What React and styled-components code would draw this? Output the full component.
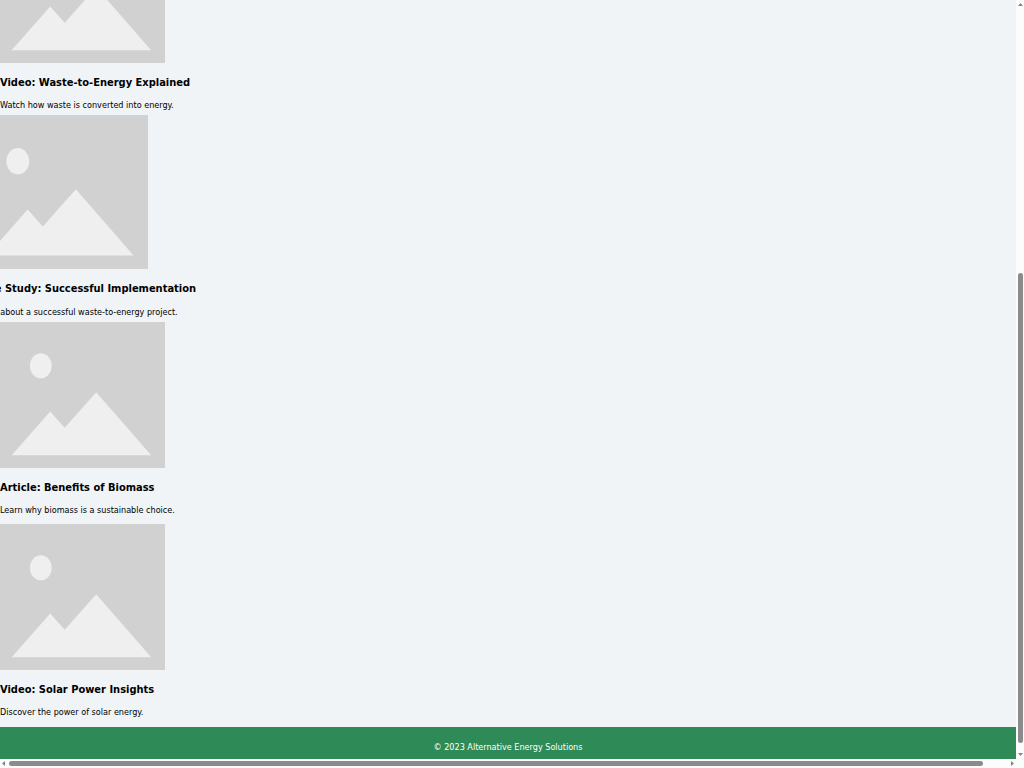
import React from "react";
import styled, { createGlobalStyle, css } from "styled-components";

const GlobalStyle = createGlobalStyle`
  body {
    margin: 0;
    background: #f0f4f7;
    color: #000;
    font-family: "DejaVu Sans Condensed", "DejaVu Sans", sans-serif;
  }
`;

const Shell = styled.div`
  display: grid;
  grid-template-columns: minmax(0, 1fr) 8px;
  grid-template-rows: minmax(0, 1fr) 9px;
  height: 100vh;
  overflow: hidden;
  background: #fcfcfc;
`;

const Page = styled.div`
  display: flex;
  flex-direction: column;
  justify-content: flex-end;
  overflow: hidden;
  background: #f0f4f7;
`;

const Card = styled.article`
  flex: none;
  ${({ $raised }) =>
    $raised &&
    css`
      margin: -4px 0 -5px -25px;
    `}
`;

const Thumbnail = styled.svg`
  display: block;
  width: ${({ $raised }) => ($raised ? "173px" : "165px")};
  height: ${({ $raised }) => ($raised ? "154px" : "146px")};
`;

const Title = styled.h3`
  margin: 12px 0 ${({ $raised }) => ($raised ? "8px" : "7px")};
  font-size: 11px;
  line-height: 16px;
  white-space: nowrap;
`;

const Summary = styled.p`
  margin: 0 0 ${({ $raised }) => ($raised ? "8px" : "7px")};
  font-size: 9px;
  line-height: 14px;
  white-space: nowrap;
`;

const Footer = styled.footer`
  flex: none;
  margin-top: 1px;
  padding: 12px 0 3px;
  background: #2e8b57;
  color: #fff;
  font-size: 9px;
  line-height: 17px;
  text-align: center;
`;

const Bar = styled.div`
  display: flex;
  flex-direction: ${({ $vertical }) => ($vertical ? "column" : "row")};
  align-items: center;
  justify-content: space-between;
`;

const Track = styled.div`
  display: flex;
  flex: 1;
  flex-direction: ${({ $vertical }) => ($vertical ? "column" : "row")};
`;

const Space = styled.div`
  flex: ${({ $grow }) => $grow};
`;

const Thumb = styled.div`
  flex: ${({ $grow }) => $grow};
  min-width: 5px;
  min-height: 5px;
  border-radius: 3px;
  background: #8b8b8b;
`;

const Arrow = styled.svg`
  display: block;
  flex: none;
  width: 9px;
  height: 9px;
`;

const resources = [
  { title: "Video: Waste-to-Energy Explained", text: "Watch how waste is converted into energy." },
  {
    title: "Case Study: Successful Implementation",
    text: "Learn about a successful waste-to-energy project.",
    raised: true,
  },
  { title: "Article: Benefits of Biomass", text: "Learn why biomass is a sustainable choice." },
  { title: "Video: Solar Power Insights", text: "Discover the power of solar energy." },
];

function Placeholder({ raised }) {
  return (
    <Thumbnail $raised={raised} viewBox="0 0 165 146" preserveAspectRatio="none" aria-hidden="true">
      <rect width="165" height="146" fill="#d1d1d1" />
      <ellipse cx="40.8" cy="43.8" rx="10.9" ry="12.5" fill="#efefef" />
      <path d="M11.6 133.2L50.2 89.5L64.7 105.8L96.2 70.3L151.2 133.2Z" fill="#efefef" />
    </Thumbnail>
  );
}

function ArrowIcon({ d }) {
  return (
    <Arrow viewBox="0 0 9 9" aria-hidden="true">
      <path d={d} fill="#858585" />
    </Arrow>
  );
}

export default function App() {
  return (
    <>
      <GlobalStyle />
      <Shell>
        <Page>
          {resources.map(({ title, text, raised }) => (
            <Card key={title} $raised={raised}>
              <Placeholder raised={raised} />
              <Title $raised={raised}>{title}</Title>
              <Summary $raised={raised}>{text}</Summary>
            </Card>
          ))}
          <Footer>© 2023 Alternative Energy Solutions</Footer>
        </Page>
        <Bar $vertical>
          <ArrowIcon d="M2 6L4.5 3L7 6Z" />
          <Track $vertical>
            <Space $grow={264} />
            <Thumb $grow={470} />
            <Space $grow={7} />
          </Track>
          <ArrowIcon d="M2 3L4.5 6L7 3Z" />
        </Bar>
        <Bar>
          <ArrowIcon d="M5 2L2 4.5L5 7Z" />
          <Track>
            <Thumb $grow={974} />
            <Space $grow={24} />
          </Track>
          <ArrowIcon d="M4 2L7 4.5L4 7Z" />
        </Bar>
      </Shell>
    </>
  );
}
